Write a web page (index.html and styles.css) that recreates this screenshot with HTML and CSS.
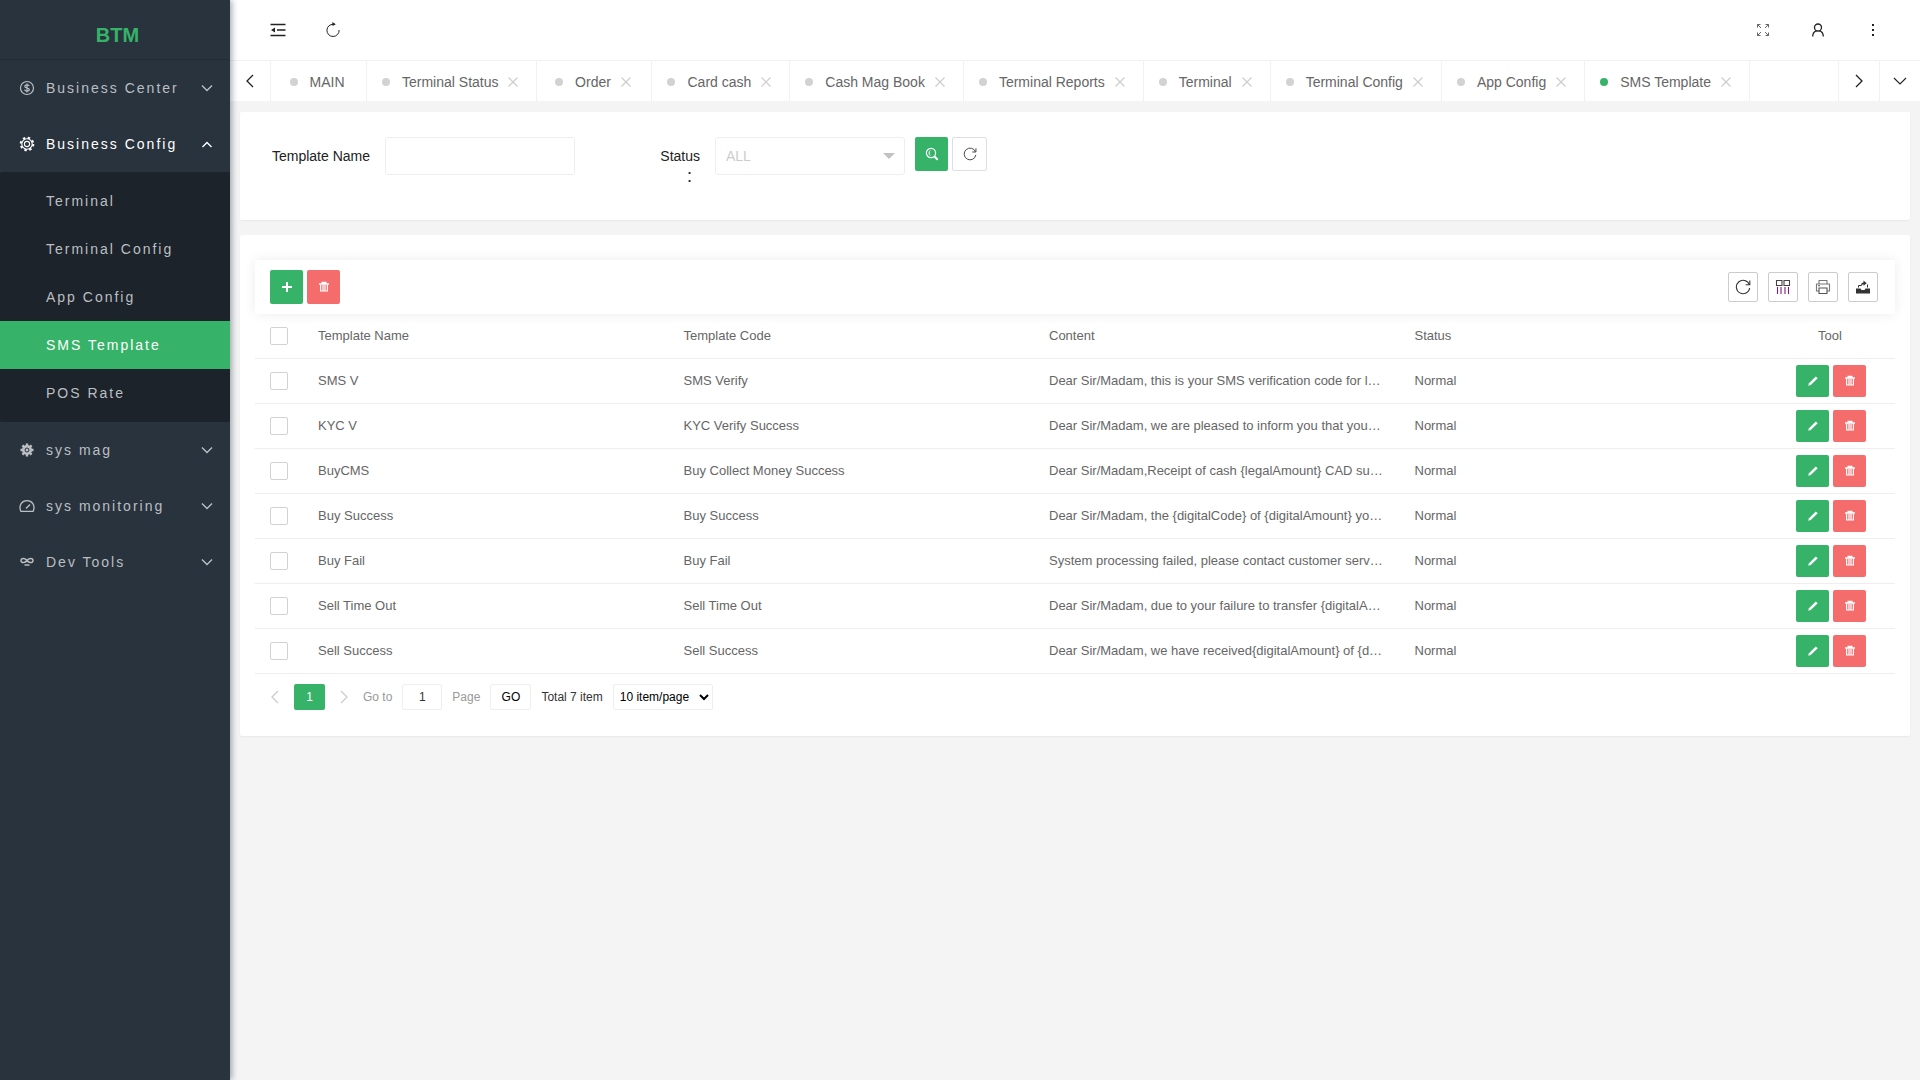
FILE: index.html
```html
<!DOCTYPE html>
<html lang="en">

<head>
    <meta charset="UTF-8">
    <meta name="viewport" content="width=device-width, initial-scale=1.0">
    <title>BTM - SMS Template</title>
    <link rel="stylesheet" href="styles.css">
</head>

<body>
    <!-- icon set -->
    <svg class="sprite" aria-hidden="true">
        <symbol id="i-down" viewBox="0 0 12 12"><path d="M1 3.5l5 5 5-5" fill="none" stroke="currentColor" stroke-width="1.4" /></symbol>
        <symbol id="i-down-thin" viewBox="0 0 14 14"><path d="M1 4l6 6 6-6" fill="none" stroke="currentColor" stroke-width="1.1" /></symbol>
        <symbol id="i-up" viewBox="0 0 12 12"><path d="M1.5 9L6 4.5 10.5 9" fill="none" stroke="currentColor" stroke-width="1.4" /></symbol>
        <symbol id="i-left" viewBox="0 0 14 14"><path d="M10 1L4 7l6 6" fill="none" stroke="currentColor" stroke-width="1.3" /></symbol>
        <symbol id="i-right" viewBox="0 0 14 14"><path d="M4 1l6 6-6 6" fill="none" stroke="currentColor" stroke-width="1.3" /></symbol>
        <symbol id="i-close" viewBox="0 0 10 10"><path d="M.5.5l9 9M9.5.5l-9 9" fill="none" stroke="currentColor" stroke-width="1.1" /></symbol>
        <symbol id="i-dollar" viewBox="0 0 16 16">
            <circle cx="8" cy="8" r="6.5" fill="none" stroke="currentColor" stroke-width="1.2" />
            <path d="M10.3 6.2C10 5.2 9.1 4.8 8 4.8c-1.3 0-2.2.6-2.2 1.6 0 2.2 4.5 1 4.5 3.2 0 1-1 1.6-2.3 1.6-1.2 0-2.2-.5-2.4-1.5M8 3.5v9" fill="none" stroke="currentColor" stroke-width="1.2" />
        </symbol>
        <symbol id="i-gear" viewBox="0 0 16 16">
            <circle cx="8" cy="8" r="6.3" fill="none" stroke="currentColor" stroke-width="2" stroke-dasharray="2.4 2.548" />
            <circle cx="8" cy="8" r="5.2" fill="none" stroke="currentColor" stroke-width="1.1" />
            <circle cx="8" cy="8" r="2.6" fill="none" stroke="currentColor" stroke-width="1.1" />
        </symbol>
        <symbol id="i-cog" viewBox="0 0 16 16">
            <path d="M8 1.5v13M1.5 8h13M3.4 3.4l9.2 9.2M12.6 3.4l-9.2 9.2" stroke="currentColor" stroke-width="2.4" />
            <circle cx="8" cy="8" r="5" fill="currentColor" />
            <circle cx="8" cy="8" r="2" fill="none" stroke="#28333e" stroke-width="1" />
        </symbol>
        <symbol id="i-gauge" viewBox="0 0 16 16">
            <path d="M1.8 13.3C-.6 7.2 3 2.7 8 2.7s8.600 4.500 6.200 10.600z" fill="none" stroke="currentColor" stroke-width="1.3" stroke-linejoin="round" />
            <path d="M7 10.5L11 6.5" stroke="currentColor" stroke-width="1.5" />
        </symbol>
        <symbol id="i-tools" viewBox="0 0 16 16">
            <path d="M8 6.5C6.5 4 2 3.700 2 6.500S6.500 9 8 6.500s6-2.800 6 0S9.500 9 8 6.500z" fill="none" stroke="currentColor" stroke-width="1.5" />
            <path d="M5.5 11h5" stroke="currentColor" stroke-width="1.5" />
        </symbol>
        <symbol id="i-fold" viewBox="0 0 16 16">
            <path d="M.5 2.5h15M.5 13.5h15M7 8h8.500" stroke="currentColor" stroke-width="1.7" />
            <path d="M1 8l4-2.500v5z" fill="currentColor" />
        </symbol>
        <symbol id="i-reload" viewBox="0 0 16 16">
            <path d="M8.5 2.3A6.100 6.100 0 1 0 14.100 8" fill="none" stroke="currentColor" stroke-width="1" />
            <path d="M7.3 0l3.500 2.200-3.200 1.900z" fill="currentColor" />
        </symbol>
        <symbol id="i-refresh" viewBox="0 0 16 16">
            <path d="M14.3 5.5A6.700 6.700 0 1 0 14.700 9" fill="none" stroke="currentColor" stroke-width="1.1" />
            <path d="M14.8 1.5v4.200h-4.200" fill="none" stroke="currentColor" stroke-width="1.1" />
        </symbol>
        <symbol id="i-full" viewBox="0 0 14 14">
            <path d="M1.5 4.500v-3h3M1.500 1.500L5 5M9.500 1.500h3v3M12.500 1.500L9 5M1.500 9.500v3h3M1.500 12.500L5 9M12.500 9.500v3h-3M12.500 12.500L9 9" fill="none" stroke="#555" stroke-width=".9" />
        </symbol>
        <symbol id="i-user" viewBox="0 0 14 14">
            <circle cx="7" cy="4.5" r="3.5" fill="none" stroke="currentColor" stroke-width="1.3" />
            <path d="M1.700 13.500c0-3 1.600-5.200 4-5.700M12.300 13.500c0-3-1.600-5.200-4-5.700" fill="none" stroke="currentColor" stroke-width="1.3" />
        </symbol>
        <symbol id="i-more" viewBox="0 0 14 14">
            <path d="M6 1h2v2H6zM6 6h2v2H6zM6 11h2v2H6z" fill="currentColor" />
        </symbol>
        <symbol id="i-search" viewBox="0 0 14 14">
            <circle cx="6" cy="6" r="4.6" fill="none" stroke="currentColor" stroke-width="1.2" />
            <path d="M5.200 3.500c-1.500 1-1.500 4 0 5" fill="none" stroke="currentColor" stroke-width="1" />
            <path d="M9.200 9.200l3.500 3.500" stroke="currentColor" stroke-width="2" />
        </symbol>
        <symbol id="i-plus" viewBox="0 0 12 12"><path d="M6 1v10M1 6h10" stroke="currentColor" stroke-width="2" /></symbol>
        <symbol id="i-trash" viewBox="0 0 12 12">
            <path d="M1 3h10M3.500 1.600h5" stroke="currentColor" stroke-width="1.6" />
            <path d="M2.600 3.500v6.500h6.800v-6.500M5 4v6M7 4v6" fill="none" stroke="currentColor" stroke-width="1.2" />
        </symbol>
        <symbol id="i-edit" viewBox="0 0 12 12">
            <path d="M1.200 10.800l.8-2.600L8.800 1.400l1.900 1.800L3.800 10z" fill="currentColor" />
        </symbol>
        <symbol id="i-cols" viewBox="0 0 16 16">
            <path d="M1.500 1.500h5.500v5H1.500zM9 1.500h5.500v5H9z" fill="none" stroke="#444" stroke-width="1.1" />
            <path d="M2.500 8v7M6 8v7M10 8v7M13.500 8v7" stroke="#7b1f7b" stroke-width="1.1" />
        </symbol>
        <symbol id="i-print" viewBox="0 0 16 16">
            <path d="M4 4.500V1.500h8v3M4 12H1.500V5h13v7H12" fill="none" stroke="#777" stroke-width="1.1" stroke-linejoin="round" />
            <path d="M4 9h8v5.500H4zM3 6.800h2" fill="none" stroke="#555" stroke-width="1.1" />
        </symbol>
        <symbol id="i-export" viewBox="0 0 16 16">
            <path d="M1 9.500h4.500l1 1.500h3l1-1.500H15v5H1z" fill="currentColor" />
            <path d="M3.500 8.500v-2h3M12.500 8.500v-3" fill="none" stroke="currentColor" stroke-width="1" />
            <path d="M6 7.500C6 4.500 7 3.600 8.500 3.600V1.500l3.200 2.800-3.200 2.500V5.200C7.500 5.200 6.700 6 6 7.500z" fill="currentColor" />
        </symbol>
    </svg>

    <aside class="side">
        <div class="logo">BTM</div>
        <nav class="menu">
            <a class="item" href="#"><svg><use href="#i-dollar" /></svg><span>Business Center</span><svg class="arrow"><use href="#i-down" /></svg></a>
            <a class="item open" href="#"><svg><use href="#i-gear" /></svg><span>Business Config</span><svg class="arrow"><use href="#i-up" /></svg></a>
            <div class="submenu">
                <a href="#">Terminal</a>
                <a href="#">Terminal Config</a>
                <a href="#">App Config</a>
                <a href="#" class="active">SMS Template</a>
                <a href="#">POS Rate</a>
            </div>
            <a class="item" href="#"><svg><use href="#i-cog" /></svg><span>sys mag</span><svg class="arrow"><use href="#i-down" /></svg></a>
            <a class="item" href="#"><svg><use href="#i-gauge" /></svg><span>sys monitoring</span><svg class="arrow"><use href="#i-down" /></svg></a>
            <a class="item" href="#"><svg><use href="#i-tools" /></svg><span>Dev Tools</span><svg class="arrow"><use href="#i-down" /></svg></a>
        </nav>
    </aside>

    <div class="main">
        <header class="header">
            <button aria-label="Fold menu"><svg><use href="#i-fold" /></svg></button>
            <button aria-label="Reload"><svg><use href="#i-reload" /></svg></button>
            <span class="spacer"></span>
            <button aria-label="Full screen"><svg class="small"><use href="#i-full" /></svg></button>
            <button aria-label="User"><svg class="small"><use href="#i-user" /></svg></button>
            <button aria-label="More"><svg class="small"><use href="#i-more" /></svg></button>
        </header>

        <div class="tabs">
            <button class="tab-ctrl first" aria-label="Previous tabs"><svg><use href="#i-left" /></svg></button>
            <a class="tab home" href="#">MAIN</a>
            <a class="tab" href="#">Terminal Status<svg><use href="#i-close" /></svg></a>
            <a class="tab" href="#">Order<svg><use href="#i-close" /></svg></a>
            <a class="tab" href="#">Card cash<svg><use href="#i-close" /></svg></a>
            <a class="tab" href="#">Cash Mag Book<svg><use href="#i-close" /></svg></a>
            <a class="tab" href="#">Terminal Reports<svg><use href="#i-close" /></svg></a>
            <a class="tab" href="#">Terminal<svg><use href="#i-close" /></svg></a>
            <a class="tab" href="#">Terminal Config<svg><use href="#i-close" /></svg></a>
            <a class="tab" href="#">App Config<svg><use href="#i-close" /></svg></a>
            <a class="tab current" href="#">SMS Template<svg><use href="#i-close" /></svg></a>
            <span class="spacer"></span>
            <button class="tab-ctrl" aria-label="Next tabs"><svg><use href="#i-right" /></svg></button>
            <button class="tab-ctrl" aria-label="Tab actions"><svg><use href="#i-down-thin" /></svg></button>
        </div>

        <main class="content">
            <form class="card search">
                <label for="templateName">Template Name</label>
                <input type="text" id="templateName">
                <label for="status">Status<br>：</label>
                <div class="select">
                    <select id="status">
                        <option>ALL</option>
                    </select>
                </div>
                <button type="button" class="btn green" aria-label="Search"><svg class="icon14"><use href="#i-search" /></svg></button>
                <button type="reset" class="btn plain" aria-label="Reset"><svg class="icon14"><use href="#i-refresh" /></svg></button>
            </form>

            <section class="card list">
                <div class="toolbar">
                    <button class="btn green" aria-label="Add"><svg><use href="#i-plus" /></svg></button>
                    <button class="btn red" aria-label="Remove"><svg><use href="#i-trash" /></svg></button>
                    <span class="spacer"></span>
                    <div class="table-tools">
                        <button aria-label="Refresh"><svg><use href="#i-refresh" /></svg></button>
                        <button aria-label="Filter columns"><svg><use href="#i-cols" /></svg></button>
                        <button aria-label="Print"><svg><use href="#i-print" /></svg></button>
                        <button aria-label="Export"><svg><use href="#i-export" /></svg></button>
                    </div>
                </div>

                <table>
                    <thead>
                        <tr>
                            <th class="check"><input type="checkbox" aria-label="Select all"></th>
                            <th>Template Name</th>
                            <th>Template Code</th>
                            <th>Content</th>
                            <th>Status</th>
                            <th class="tool">Tool</th>
                        </tr>
                    </thead>
                    <tbody>
                        <tr>
                            <td><input type="checkbox" aria-label="SMS V"></td>
                            <td>SMS V</td>
                            <td>SMS Verify</td>
                            <td>Dear Sir/Madam, this is your SMS verification code for l…</td>
                            <td>Normal</td>
                            <td class="tool"><button class="btn green" aria-label="Edit"><svg><use href="#i-edit" /></svg></button><button class="btn red" aria-label="Delete"><svg><use href="#i-trash" /></svg></button></td>
                        </tr>
                        <tr>
                            <td><input type="checkbox" aria-label="KYC V"></td>
                            <td>KYC V</td>
                            <td>KYC Verify Success</td>
                            <td>Dear Sir/Madam, we are pleased to inform you that you…</td>
                            <td>Normal</td>
                            <td class="tool"><button class="btn green" aria-label="Edit"><svg><use href="#i-edit" /></svg></button><button class="btn red" aria-label="Delete"><svg><use href="#i-trash" /></svg></button></td>
                        </tr>
                        <tr>
                            <td><input type="checkbox" aria-label="BuyCMS"></td>
                            <td>BuyCMS</td>
                            <td>Buy Collect Money Success</td>
                            <td>Dear Sir/Madam,Receipt of cash {legalAmount} CAD su…</td>
                            <td>Normal</td>
                            <td class="tool"><button class="btn green" aria-label="Edit"><svg><use href="#i-edit" /></svg></button><button class="btn red" aria-label="Delete"><svg><use href="#i-trash" /></svg></button></td>
                        </tr>
                        <tr>
                            <td><input type="checkbox" aria-label="Buy Success"></td>
                            <td>Buy Success</td>
                            <td>Buy Success</td>
                            <td>Dear Sir/Madam, the {digitalCode} of {digitalAmount} yo…</td>
                            <td>Normal</td>
                            <td class="tool"><button class="btn green" aria-label="Edit"><svg><use href="#i-edit" /></svg></button><button class="btn red" aria-label="Delete"><svg><use href="#i-trash" /></svg></button></td>
                        </tr>
                        <tr>
                            <td><input type="checkbox" aria-label="Buy Fail"></td>
                            <td>Buy Fail</td>
                            <td>Buy Fail</td>
                            <td>System processing failed, please contact customer serv…</td>
                            <td>Normal</td>
                            <td class="tool"><button class="btn green" aria-label="Edit"><svg><use href="#i-edit" /></svg></button><button class="btn red" aria-label="Delete"><svg><use href="#i-trash" /></svg></button></td>
                        </tr>
                        <tr>
                            <td><input type="checkbox" aria-label="Sell Time Out"></td>
                            <td>Sell Time Out</td>
                            <td>Sell Time Out</td>
                            <td>Dear Sir/Madam, due to your failure to transfer {digitalA…</td>
                            <td>Normal</td>
                            <td class="tool"><button class="btn green" aria-label="Edit"><svg><use href="#i-edit" /></svg></button><button class="btn red" aria-label="Delete"><svg><use href="#i-trash" /></svg></button></td>
                        </tr>
                        <tr>
                            <td><input type="checkbox" aria-label="Sell Success"></td>
                            <td>Sell Success</td>
                            <td>Sell Success</td>
                            <td>Dear Sir/Madam, we have received{digitalAmount} of {d…</td>
                            <td>Normal</td>
                            <td class="tool"><button class="btn green" aria-label="Edit"><svg><use href="#i-edit" /></svg></button><button class="btn red" aria-label="Delete"><svg><use href="#i-trash" /></svg></button></td>
                        </tr>
                    </tbody>
                </table>

                <div class="pager">
                    <button class="step" aria-label="Previous page"><svg><use href="#i-left" /></svg></button>
                    <button class="page">1</button>
                    <button class="step" aria-label="Next page"><svg><use href="#i-right" /></svg></button>
                    <label for="goto">Go to</label>
                    <input type="text" id="goto" value="1">
                    <span class="muted">Page</span>
                    <button class="go">GO</button>
                    <span>Total 7 item</span>
                    <select aria-label="Items per page">
                        <option>10 item/page</option>
                    </select>
                </div>
            </section>
        </main>
    </div>
</body>

</html>
```
FILE: styles.css
```css
* {
    box-sizing: border-box;
}

body {
    margin: 0;
    display: flex;
    min-height: 100vh;
    background: #f4f4f4;
    color: #222;
    font-family: "Liberation Sans", Arial, "Noto Sans CJK SC", sans-serif;
    font-size: 14px;
    line-height: 20px;
}

a {
    color: inherit;
    text-decoration: none;
}

button,
input,
select {
    font-family: inherit;
    font-size: inherit;
    margin: 0;
    padding: 0;
    outline: none;
}

button {
    border: none;
    background: none;
    color: inherit;
    cursor: pointer;
    display: flex;
    align-items: center;
    justify-content: center;
}

svg {
    width: 16px;
    height: 16px;
    flex-shrink: 0;
}

.sprite {
    display: none;
}

.spacer {
    flex: 1;
}

/* sidebar */
.side {
    position: relative;
    flex: 0 0 230px;
    background: #28333e;
    color: #bbbfc2;
    box-shadow: 2px 0 6px rgba(0, 21, 41, 0.35);
}

.logo {
    height: 60px;
    padding: 5px 0 0 5px;
    line-height: 60px;
    border-bottom: 1px solid #222c36;
    color: #36b368;
    font-size: 20px;
    font-weight: bold;
    text-align: center;
}

.item {
    display: flex;
    align-items: center;
    height: 56px;
    padding: 0 17px 0 19px;
    letter-spacing: 2px;
}

.item span {
    flex: 1;
    padding-left: 11px;
}

.item .arrow {
    width: 12px;
    height: 12px;
}

.item.open {
    color: #fff;
}

.submenu {
    padding: 5px 0;
    background: #1c232a;
    border-radius: 2px;
}

.submenu a {
    display: block;
    padding-left: 46px;
    line-height: 48px;
    letter-spacing: 2px;
}

.submenu .active {
    background: #36b368;
    color: #fff;
}

/* top bar */
.main {
    flex: 1;
    min-width: 0;
}

.header {
    display: flex;
    height: 60px;
    padding: 0 20px;
    background: #fff;
}

.header button {
    width: 55px;
}

.header .small {
    width: 14px;
    height: 14px;
}

.tabs {
    display: flex;
    height: 41px;
    border-top: 1px solid #f2f2f2;
    background: #fff;
    color: #666;
}

.tab-ctrl {
    width: 41px;
    border-left: 1px solid #f2f2f2;
    color: #222;
}

.tab-ctrl svg {
    width: 14px;
    height: 14px;
}

.tab-ctrl.first {
    border-left: none;
    border-right: 1px solid #f2f2f2;
}

.tab {
    display: flex;
    align-items: center;
    justify-content: center;
    min-width: 115px;
    padding: 2px 18px 0 15px;
    border-right: 1px solid #f2f2f2;
    white-space: nowrap;
}

.tab::before {
    content: "";
    width: 8px;
    height: 8px;
    margin-right: 12px;
    border-radius: 50%;
    background: #d2d2d2;
}

.tab svg {
    width: 10px;
    height: 10px;
    margin-left: 10px;
    color: #ccc;
}

.tab.home {
    min-width: 96px;
}

.tab.current::before {
    background: #36b368;
}

/* cards */
.content {
    display: flex;
    flex-direction: column;
    gap: 15px;
    padding: 11px 10px;
}

.card {
    background: #fff;
    border-radius: 2px;
    box-shadow: 0 1px 2px rgba(0, 0, 0, 0.05);
}

.btn {
    width: 33px;
    height: 34px;
    border-radius: 2px;
    color: #fff;
}

.btn svg {
    width: 12px;
    height: 12px;
}

.btn .icon14 {
    width: 14px;
    height: 14px;
}

.green {
    background: #36b368;
}

.red {
    background: #f56c6c;
}

.plain {
    width: 35px;
    border: 1px solid #dcdfe6;
    color: #444;
}

/* search form */
.search {
    display: flex;
    align-items: flex-start;
    height: 108px;
    padding: 25px 20px;
}

.search label {
    width: 50px;
    padding-top: 9px;
    margin: 0 15px 0 75px;
    text-align: right;
}

.search label:first-child {
    width: 110px;
    margin-left: 0;
}

.search input,
.select {
    width: 190px;
    height: 38px;
    border: 1px solid #eee;
    border-radius: 3px;
}

.search .select {
    margin-right: 10px;
}

.select {
    position: relative;
}

.select select {
    width: 100%;
    height: 100%;
    padding-left: 10px;
    border: none;
    background: none;
    color: #ccc;
    appearance: none;
}

.select::after {
    content: "";
    position: absolute;
    right: 9px;
    top: 15px;
    border: 6px solid transparent;
    border-top-color: #c2c2c2;
    pointer-events: none;
}

.search .plain {
    margin-left: 4px;
}

/* template list */
.list {
    padding: 25px 15px 26px;
}

.toolbar {
    display: flex;
    align-items: center;
    gap: 4px;
    height: 54px;
    padding: 0 17px 0 15px;
    box-shadow: 0 0 12px rgba(0, 0, 0, 0.08);
}

.table-tools {
    display: flex;
    gap: 10px;
}

.table-tools button {
    width: 30px;
    height: 30px;
    border: 1px solid #ccc;
    border-radius: 2px;
    color: #333;
}

table {
    width: 100%;
    table-layout: fixed;
    border-collapse: separate;
    border-spacing: 0;
    color: #666;
    font-size: 13px;
}

th,
td {
    height: 45px;
    padding: 0 15px;
    border-bottom: 1px solid #eee;
    font-weight: normal;
    text-align: left;
    white-space: nowrap;
}

.check {
    width: 48px;
}

th.tool {
    width: 130px;
    text-align: center;
}

td.tool {
    padding: 0 0 0 31px;
}

.tool .btn {
    display: inline-flex;
    height: 32px;
    vertical-align: middle;
}

.tool .red {
    margin-left: 4px;
}

td input,
th input {
    display: block;
    width: 18px;
    height: 18px;
    border: 1px solid #d2d2d2;
    border-radius: 2px;
    background: #fff;
    appearance: none;
}

.pager {
    display: flex;
    align-items: center;
    gap: 10px;
    margin-top: 10px;
    padding-left: 11px;
    font-size: 12px;
    color: #333;
}

.pager .page,
.pager .go,
.pager select,
.pager input {
    height: 26px;
    border: 1px solid #eee;
    border-radius: 2px;
    background: #fff;
}

.pager .step {
    width: 18px;
    color: #ccc;
}

.pager .step svg {
    width: 14px;
    height: 14px;
}

.pager .page {
    width: 31px;
    border: none;
    background: #36b368;
    color: #fff;
}

.pager input {
    width: 40px;
    text-align: center;
    color: #333;
}

.pager .go {
    width: 41px;
    color: #000;
}

.pager select {
    width: 100px;
    padding-left: 2px;
    color: #000;
}

.pager label,
.muted {
    color: #999;
}
```
